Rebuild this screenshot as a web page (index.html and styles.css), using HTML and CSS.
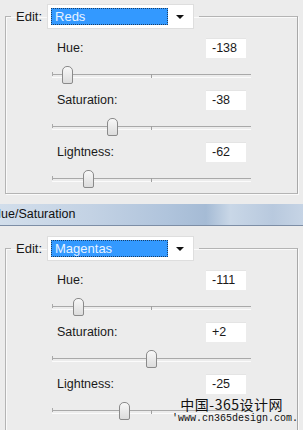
FILE: index.html
```html
<!DOCTYPE html>
<html lang="en">
<head>
    <meta charset="UTF-8">
    <title>Hue/Saturation</title>
    <link rel="stylesheet" href="styles.css">
</head>
<body>
    <div class="panel panel-top">
        <fieldset class="group">
            <legend class="edit">
                <span class="edit-label">Edit:</span>
                <span class="dropdown">
                    <span class="selected">Reds</span>
                    <span class="arrow"></span>
                </span>
            </legend>
            <div class="rows">
                <div class="row">
                    <span class="label">Hue:</span>
                    <span class="value">-138</span>
                </div>
                <div class="slider"><span class="tick"></span><span class="thumb" style="left: 10px"></span></div>
                <div class="row">
                    <span class="label">Saturation:</span>
                    <span class="value">-38</span>
                </div>
                <div class="slider"><span class="tick"></span><span class="thumb" style="left: 55px"></span></div>
                <div class="row">
                    <span class="label">Lightness:</span>
                    <span class="value">-62</span>
                </div>
                <div class="slider"><span class="tick"></span><span class="thumb" style="left: 31px"></span></div>
            </div>
        </fieldset>
    </div>

    <div class="titlebar"><span class="title">Hue/Saturation</span></div>

    <div class="panel panel-bottom">
        <fieldset class="group">
            <legend class="edit">
                <span class="edit-label">Edit:</span>
                <span class="dropdown">
                    <span class="selected">Magentas</span>
                    <span class="arrow"></span>
                </span>
            </legend>
            <div class="rows">
                <div class="row">
                    <span class="label">Hue:</span>
                    <span class="value">-111</span>
                </div>
                <div class="slider"><span class="tick"></span><span class="thumb" style="left: 21px"></span></div>
                <div class="row">
                    <span class="label">Saturation:</span>
                    <span class="value">+2</span>
                </div>
                <div class="slider"><span class="tick"></span><span class="thumb" style="left: 94px"></span></div>
                <div class="row">
                    <span class="label">Lightness:</span>
                    <span class="value">-25</span>
                </div>
                <div class="slider"><span class="tick"></span><span class="thumb" style="left: 67px"></span></div>
            </div>
        </fieldset>
        <div class="watermark">
            <div class="wm-cn">中国-365设计网</div>
            <div class="wm-url">'www.cn365design.com.</div>
        </div>
    </div>
</body>
</html>
```

FILE: styles.css
```css
* {
    margin: 0;
    padding: 0;
    box-sizing: border-box;
}

body {
    font-family: 'Liberation Sans', Arial, sans-serif;
    font-size: 12px;
    color: #1a1a1a;
    background: #ececec;
    width: 303px;
    height: 430px;
    overflow: hidden;
}

.panel {
    background: #ececec;
    position: relative;
}

.panel-top {
    height: 204px;
    padding-top: 3px;
}

.panel-bottom {
    height: 204px;
    padding-top: 9px;
}

.group {
    margin: 0 5px 0 5px;
    border: 1px solid #b4b4b4;
    border-right-color: #a8a8a8;
    box-shadow: inset 1px 1px 0 #fafafa, 1px 1px 0 #fafafa;
    padding: 9px 46px 0 46px;
    height: 191px;
}

.panel-bottom .group {
    height: 200px;
}

.edit {
    margin-left: -41px;
    padding: 0 5px 0 5px;
    display: flex;
    align-items: center;
    height: 26px;
}

.edit-label {
    margin-right: 5px;
    font-size: 13px;
}

.dropdown {
    width: 147px;
    height: 25px;
    background: #fff;
    border: 1px solid #dedede;
    display: flex;
    align-items: center;
    padding: 0 3px;
}

.selected {
    flex: 1;
    height: 17px;
    background: #3399ff;
    border: 1px dotted #1a3f66;
    color: #e8f3ff;
    font-size: 13px;
    line-height: 15px;
    padding-left: 3px;
}

.arrow {
    width: 0;
    height: 0;
    margin: 1px 6px 0 8px;
    border-left: 4px solid transparent;
    border-right: 4px solid transparent;
    border-top: 4px solid #111;
}

.row {
    display: flex;
    justify-content: space-between;
    align-items: center;
    height: 20px;
    padding-left: 5px;
    padding-right: 5px;
}

.label {
    font-size: 12.5px;
}

.value {
    width: 40px;
    height: 20px;
    background: #fff;
    border-top: 1px solid #e4e4e4;
    padding-left: 6px;
    line-height: 19px;
    font-size: 12.5px;
}

.slider {
    position: relative;
    height: 32px;
}

.slider::before {
    content: "";
    position: absolute;
    left: 0;
    right: 0;
    top: 16px;
    height: 2px;
    border-top: 1px solid #a9a9a9;
    border-bottom: 1px solid #fbfbfb;
}

.slider::after {
    content: "";
    position: absolute;
    left: 0;
    top: 14px;
    width: 1px;
    height: 4px;
    background: #a9a9a9;
}

.tick {
    position: absolute;
    left: 99px;
    top: 16px;
    width: 1px;
    height: 4px;
    background: #a0a0a0;
}

.thumb {
    position: absolute;
    top: 8px;
    width: 11px;
    height: 18px;
    border: 1px solid #8a8a8a;
    border-radius: 5px 5px 2px 2px;
    background: linear-gradient(#f8f8f8, #dcdcdc);
}

.titlebar {
    height: 22px;
    background: linear-gradient(90deg, #d2deeb 0%, #c3d2e4 30%, #b0c4dc 55%, #a5bbd5 68%, #c9d7e7 76%, #b8c9de 90%, #c6d4e5 100%);
    border-bottom: 1px solid #7d8ea6;
    overflow: hidden;
    white-space: nowrap;
}

.title {
    display: block;
    margin-left: -8px;
    line-height: 21px;
    font-size: 12.5px;
    color: #111;
}

.watermark {
    position: absolute;
    left: 172px;
    top: 170px;
    text-align: right;
    width: 124px;
}

.wm-cn {
    font-family: 'Noto Sans CJK SC', sans-serif;
    font-size: 14px;
    line-height: 17px;
    letter-spacing: 0.5px;
    padding-right: 13px;
    color: #111;
}

.wm-url {
    font-family: 'Liberation Mono', monospace;
    font-size: 10px;
    line-height: 12px;
    color: #111;
}
```
